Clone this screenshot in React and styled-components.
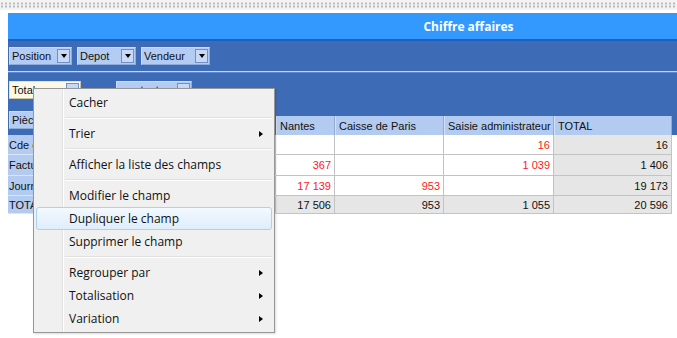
import React from 'react';
import styled, { createGlobalStyle } from 'styled-components';

const GlobalStyle = createGlobalStyle`
  html, body {
    margin: 0;
    padding: 0;
    background: #ffffff;
  }
  body {
    font-family: "Liberation Sans", Arial, sans-serif;
  }
`;

const Page = styled.div`
  position: relative;
  width: 677px;
  height: 338px;
  overflow: hidden;
  background: #ffffff;
`;

const DotStrip = styled.div`
  height: 6px;
  padding: 2px 0;
  background:
    radial-gradient(circle at 2px 1.5px, #b9b9b9 0.9px, transparent 1.3px) 0 0 / 4px 3px content-box,
    #f3f3f3;
`;

const Panel = styled.div`
  margin: 3px 0 0 8px;
`;

const TitleBar = styled.div`
  height: 26px;
  display: flex;
  align-items: center;
  padding: 0 16px 0 268px;
  background: #3399ff;
  border-bottom: 2px solid #1f5ec2;
`;

const Title = styled.div`
  flex: 1;
  text-align: center;
  color: #ffffff;
  font-family: "Open Sans", sans-serif;
  font-weight: 700;
  font-size: 12px;
`;

const BlueArea = styled.div`
  background: #3d6bb6;
`;

const FieldRow = styled.div`
  height: ${(p) => p.$h}px;
  box-sizing: border-box;
  display: flex;
  align-items: flex-start;
  gap: ${(p) => p.$gap}px;
  padding: ${(p) => p.$top}px 0 0 1px;
  border-bottom: ${(p) => (p.$divider ? '1px solid #c6d5ef' : 'none')};
  border-top: ${(p) => (p.$shade ? '1px solid #5f86c6' : 'none')};
`;

const FieldButton = styled.div`
  display: inline-flex;
  align-items: center;
  justify-content: space-between;
  gap: 6px;
  height: 18px;
  width: ${(p) => p.$width}px;
  box-sizing: border-box;
  padding: 0 1px 0 2px;
  background: ${(p) => (p.$cream ? '#fdf9e6' : '#b4ccf1')};
  border: 1px solid ${(p) => (p.$cream ? '#e9e2c4' : '#cddcf5')};
  border-right-color: ${(p) => (p.$cream ? '#c9c1a0' : '#8eaadb')};
  border-bottom-color: ${(p) => (p.$cream ? '#c9c1a0' : '#8eaadb')};
  font-size: 11px;
  color: #111111;
  white-space: nowrap;
  overflow: hidden;
`;

const DropBox = styled.span`
  flex: none;
  display: inline-flex;
  align-items: center;
  justify-content: center;
  width: 13px;
  height: 14px;
  box-sizing: border-box;
  background: #c8d9f6;
  border: 1px solid #6f8fcc;

  &::after {
    content: '';
    border-left: 3.5px solid transparent;
    border-right: 3.5px solid transparent;
    border-top: 4px solid #000000;
  }
`;

const columns = '268px 59px 109px 110px 118px';

const HeaderRow = styled.div`
  display: grid;
  grid-template-columns: ${columns};
  height: 25px;
  align-items: end;
`;

const LabelHead = styled.div`
  align-self: start;
  padding-left: 1px;
`;

const HeadCell = styled.div`
  height: 19px;
  box-sizing: border-box;
  display: flex;
  align-items: center;
  padding-left: 3px;
  background: #b3cbf0;
  border-left: 1px solid #d4e1f7;
  border-right: 1px solid #8daad9;
  font-size: 11px;
  color: #111111;
  white-space: nowrap;
`;

const BodyRow = styled.div`
  display: grid;
  grid-template-columns: ${columns};
  height: ${(p) => p.$h}px;
`;

const LabelCell = styled.div`
  display: flex;
  align-items: center;
  padding-left: 1px;
  background: #b3cbf0;
  border-bottom: 1px solid #dbe5f6;
  font-size: 11px;
  color: #111111;
`;

const DataCell = styled.div`
  display: flex;
  align-items: center;
  justify-content: flex-end;
  padding-right: 3px;
  background: ${(p) => (p.$gray ? '#e6e6e6' : '#ffffff')};
  border-right: 1px solid #c3c3c3;
  border-bottom: 1px solid #c3c3c3;
  font-size: 11px;
  color: ${(p) => (p.$red ? '#ff2020' : '#111111')};
`;

const Menu = styled.div`
  position: absolute;
  left: 33px;
  top: 88px;
  width: 242px;
  height: 245px;
  box-sizing: border-box;
  padding: 2px;
  background: #f0f0f0;
  border: 1px solid #979797;
  box-shadow: 1px 1px 2px rgba(0, 0, 0, 0.15);
  font-family: "Open Sans", sans-serif;
  font-size: 12px;
  color: #111111;

  &::before,
  &::after {
    content: '';
    position: absolute;
    top: 0;
    bottom: 0;
    width: 1px;
  }
  &::before {
    left: 28px;
    background: #e0e1e1;
  }
  &::after {
    left: 29px;
    background: #ffffff;
  }
`;

const MenuItem = styled.div`
  position: relative;
  z-index: 1;
  height: 23px;
  box-sizing: border-box;
  display: flex;
  align-items: center;
  justify-content: space-between;
  padding: 0 8px 0 32px;
  border: 1px solid ${(p) => (p.$active ? '#a9d3f2' : 'transparent')};
  border-radius: 3px;
  background: ${(p) => (p.$active ? 'linear-gradient(#f3f9fe, #dfedfb)' : 'transparent')};
`;

const SubArrow = styled.span`
  border-top: 3.5px solid transparent;
  border-bottom: 3.5px solid transparent;
  border-left: 4px solid #000000;
`;

const MenuSeparator = styled.div`
  position: relative;
  z-index: 1;
  height: 8px;
  display: flex;
  align-items: center;
  margin-left: 29px;

  &::before {
    content: '';
    flex: 1;
    height: 1px;
    background: #e0e0e0;
    border-bottom: 1px solid #ffffff;
  }
`;

const rows = [
  { label: 'Cde client', h: 20, cells: ['', '', '16', '16'] },
  { label: 'Facture', h: 21, cells: ['367', '', '1 039', '1 406'] },
  { label: 'Journal', h: 20, cells: ['17 139', '953', '', '19 173'] },
];

const menu = [
  { text: 'Cacher' },
  { sep: true },
  { text: 'Trier', sub: true },
  { sep: true },
  { text: 'Afficher la liste des champs' },
  { sep: true },
  { text: 'Modifier le champ' },
  { text: 'Dupliquer le champ', active: true },
  { text: 'Supprimer le champ' },
  { sep: true },
  { text: 'Regrouper par', sub: true },
  { text: 'Totalisation', sub: true },
  { text: 'Variation', sub: true },
];

const App = () => {
  return (
    <Page>
      <GlobalStyle />
      <DotStrip />
      <Panel>
        <TitleBar>
          <Title>Chiffre affaires</Title>
        </TitleBar>
        <BlueArea>
          <FieldRow $divider $h={31} $top={6} $gap={5}>
            <FieldButton $width={63}>
              Position <DropBox />
            </FieldButton>
            <FieldButton $width={59}>
              Depot <DropBox />
            </FieldButton>
            <FieldButton $width={69}>
              Vendeur <DropBox />
            </FieldButton>
          </FieldRow>
          <FieldRow $shade $h={38} $top={8} $gap={35}>
            <FieldButton $cream $width={72}>
              Total <DropBox />
            </FieldButton>
            <FieldButton $width={76}>
              montant <DropBox />
            </FieldButton>
          </FieldRow>
          <HeaderRow>
            <LabelHead>
              <FieldButton $width={120}>
                Pièce <DropBox />
              </FieldButton>
            </LabelHead>
            <HeadCell>Nantes</HeadCell>
            <HeadCell>Caisse de Paris</HeadCell>
            <HeadCell>Saisie administrateur</HeadCell>
            <HeadCell>TOTAL</HeadCell>
          </HeaderRow>
        </BlueArea>
        {rows.map((row) => (
          <BodyRow key={row.label} $h={row.h}>
            <LabelCell>{row.label}</LabelCell>
            {row.cells.map((v, i) => (
              <DataCell key={i} $red={i < 3} $gray={i === 3}>
                {v}
              </DataCell>
            ))}
          </BodyRow>
        ))}
        <BodyRow $h={18}>
          <LabelCell>TOTAL</LabelCell>
          {['17 506', '953', '1 055', '20 596'].map((v, i) => (
            <DataCell key={i} $gray>
              {v}
            </DataCell>
          ))}
        </BodyRow>
      </Panel>
      <Menu>
        {menu.map((item, i) =>
          item.sep ? (
            <MenuSeparator key={i} />
          ) : (
            <MenuItem key={i} $active={item.active}>
              <span>{item.text}</span>
              {item.sub && <SubArrow />}
            </MenuItem>
          )
        )}
      </Menu>
    </Page>
  );
};

export default App;
